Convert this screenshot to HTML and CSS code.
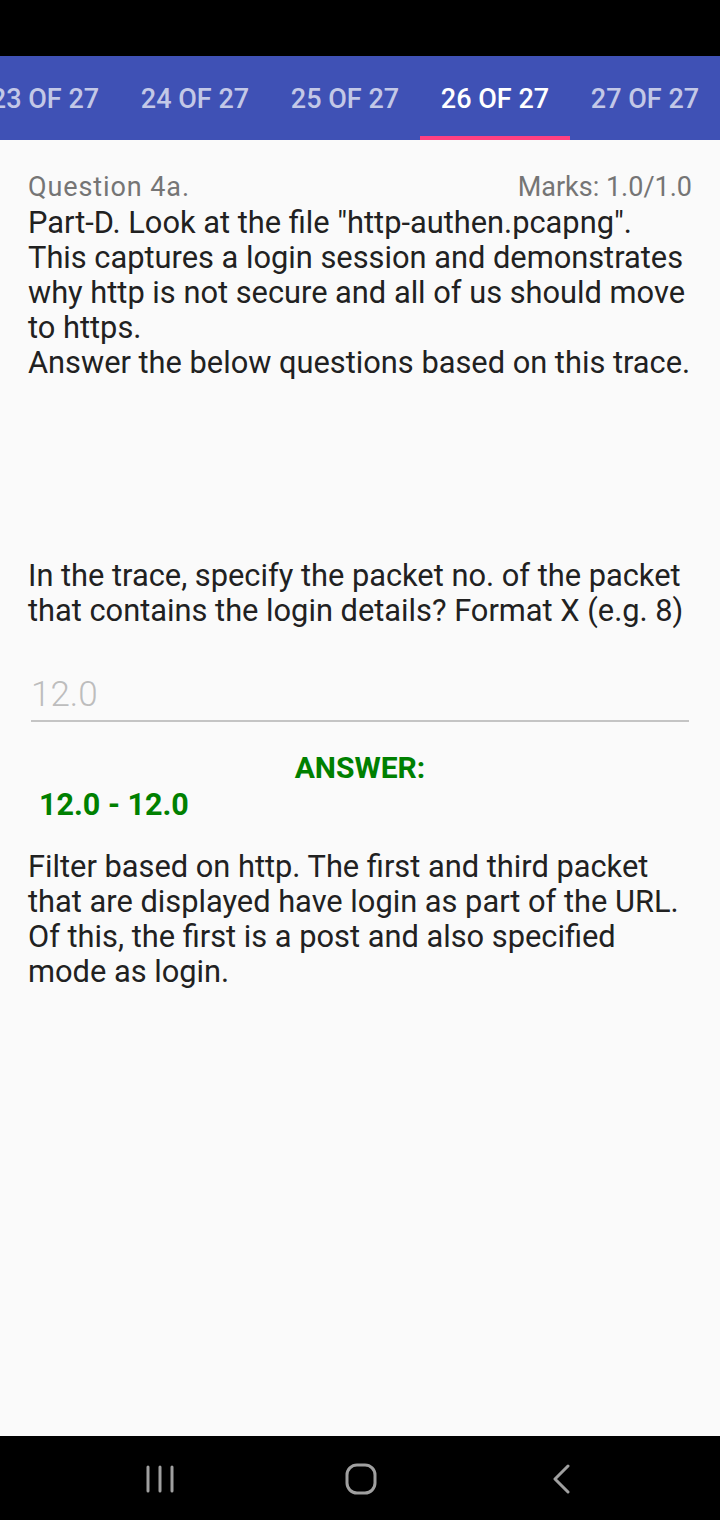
FILE: index.html
```html
<!DOCTYPE html>
<html>
<head>
<meta charset="utf-8">
<link rel="stylesheet" href="styles.css">
</head>
<body>
<div class="screen">
  <div class="statusbar"></div>
  <div class="tabs">
    <div class="tab">23 OF 27</div>
    <div class="tab">24 OF 27</div>
    <div class="tab">25 OF 27</div>
    <div class="tab active">26 OF 27</div>
    <div class="tab">27 OF 27</div>
  </div>
  <main class="content">
    <div class="qhead">
      <span class="qnum">Question 4a.</span>
      <span class="marks">Marks: 1.0/1.0</span>
    </div>
    <p class="body intro">Part-D. Look at the file "http-authen.pcapng". This captures a login session and demonstrates why http is not secure and all of us should move to https.<br>Answer the below questions based on this trace.</p>
    <p class="body question">In the trace, specify the packet no. of the packet that contains the login details? Format X (e.g. 8)</p>
    <div class="input">12.0</div>
    <div class="answer-label">ANSWER:</div>
    <div class="answer-value">12.0 - 12.0</div>
    <p class="body explain">Filter based on http. The first and third packet that are displayed have login as part of the URL. Of this, the first is a post and also specified mode as login.</p>
  </main>
  <div class="navbar">
    <svg class="nav-icon recents" width="28" height="30" viewBox="0 0 28 30"><g stroke="#a0a0a0" stroke-width="3" stroke-linecap="round"><line x1="2" y1="3" x2="2" y2="27"/><line x1="14" y1="3" x2="14" y2="27"/><line x1="26" y1="3" x2="26" y2="27"/></g></svg>
    <svg class="nav-icon home" width="32" height="32" viewBox="0 0 32 32"><rect x="2" y="2" width="28" height="28" rx="10" fill="none" stroke="#a0a0a0" stroke-width="3"/></svg>
    <svg class="nav-icon back" width="18" height="30" viewBox="0 0 18 30"><polyline points="15,2 2,15 15,28" fill="none" stroke="#a0a0a0" stroke-width="3" stroke-linecap="round" stroke-linejoin="round"/></svg>
  </div>
</div>
</body>
</html>
```

FILE: styles.css
```css
* { box-sizing: border-box; }
html, body { margin: 0; padding: 0; }
body {
  width: 720px;
  height: 1520px;
  background: #fafafa;
  font-family: Roboto, "Liberation Sans", sans-serif;
  overflow: hidden;
}
.screen {
  width: 720px;
  height: 1520px;
  display: flex;
  flex-direction: column;
}
.statusbar {
  height: 56px;
  background: #000;
  flex: none;
}
.tabs {
  height: 84px;
  background: #3f51b5;
  display: flex;
  margin-left: -30px;
  flex: none;
}
.tab {
  width: 150px;
  flex: none;
  display: flex;
  align-items: center;
  justify-content: center;
  color: rgba(255,255,255,0.7);
  font-size: 27px;
  font-weight: 500;
  white-space: nowrap;
  border-bottom: 4px solid transparent;
  padding-top: 5px;
}
.tab.active {
  color: #fff;
  border-bottom-color: #ff4081;
}
.content {
  flex: 1;
  padding: 29px 28px 0 28px;
}
.qhead {
  display: flex;
  justify-content: space-between;
  font-size: 27px;
  color: #757575;
  line-height: 36px;
}
.qnum { letter-spacing: 0.9px; }
.body {
  margin: 0;
  font-size: 30.8px;
  line-height: 35px;
  color: #212121;
}
.intro { margin-bottom: 178px; }
.input {
  margin: 47px 3px 0 3px;
  font-size: 35px;
  font-weight: 300;
  color: #bdbdbd;
  line-height: 40px;
  padding-bottom: 5px;
  border-bottom: 2px solid #c4c4c4;
}
.answer-label {
  text-align: center;
  color: #008000;
  font-weight: 700;
  font-size: 30px;
  line-height: 36px;
  margin-top: 28px;
}
.answer-value {
  color: #008000;
  font-weight: 700;
  font-size: 30.5px;
  line-height: 38px;
  padding-left: 11px;
  margin-bottom: 25px;
}
.navbar {
  height: 84px;
  background: #000;
  flex: none;
  display: flex;
  align-items: center;
  padding: 2px 0 0 146px;
}
.home { margin-left: 171px; }
.back { margin-left: 176px; }
```
